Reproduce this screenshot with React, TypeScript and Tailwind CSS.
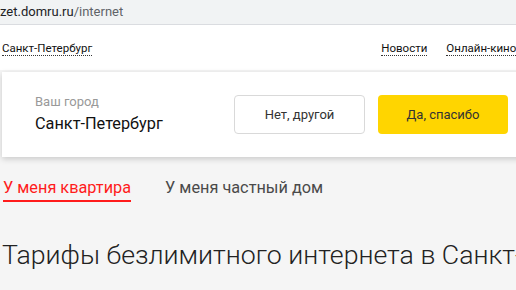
import React from "react";

function AddressBar() {
  return (
    <div className="h-[25px] bg-[#f1f3f4] border-b border-[#dadce0] flex items-center">
      <span className="text-[13px] leading-none text-[#202124] -mt-[1px]">
        zet.domru.ru<span className="text-[#5f6368]">/internet</span>
      </span>
    </div>
  );
}

function Header() {
  return (
    <div className="h-[45px] bg-white flex items-center pl-[2px] w-[560px]">
      <a className="text-[11.5px] text-[#111] border-b border-dotted border-[#333] leading-[14px] mt-[2px]">
        Санкт-Петербург
      </a>
      <nav className="flex items-center gap-[19px] mt-[2px] ml-[289px]">
        <a className="text-[11.5px] text-[#111] border-b border-dotted border-[#333] leading-[14px]">Новости</a>
        <a className="text-[11.5px] text-[#111] border-b border-dotted border-[#333] leading-[14px] whitespace-nowrap">
          Онлайн-кино
        </a>
      </nav>
    </div>
  );
}

function CityCard() {
  return (
    <div className="ml-[2px] mt-[2px] w-[540px] h-[85px] bg-white shadow-[0_2px_6px_rgba(0,0,0,0.18)] flex items-center pl-[33px] pr-[34px]">
      <div className="flex flex-col -mt-[2px]">
        <span className="text-[13px] text-[#999] leading-[16px]">Ваш город</span>
        <span className="text-[16.3px] text-[#111] leading-[20px] mt-[4px]">Санкт-Петербург</span>
      </div>
      <div className="ml-auto flex gap-[13px]">
        <button className="w-[131px] h-[39px] border border-[#d9d9d9] rounded-[4px] bg-white text-[13px] text-[#333]">
          Нет, другой
        </button>
        <button className="w-[130px] h-[39px] rounded-[4px] bg-[#ffd500] text-[13px] text-[#333]">
          Да, спасибо
        </button>
      </div>
    </div>
  );
}

function Tabs() {
  return (
    <div className="flex gap-[34px] pl-[3px] mt-[21px]">
      <div className="text-[16.3px] text-[#ff1c1c] leading-[20px] pb-[2px] border-b-2 border-[#ff1c1c]">
        У меня квартира
      </div>
      <div className="text-[16.3px] text-[#4a4a4a] leading-[20px] pb-[2px]">У меня частный дом</div>
    </div>
  );
}

export default function App() {
  return (
    <div className="w-[516px] h-[290px] overflow-hidden bg-[#f5f5f5] font-['Roboto',sans-serif]">
      <AddressBar />
      <Header />
      <CityCard />
      <Tabs />
      <h1 className="whitespace-nowrap pl-[2px] mt-[36px] text-[26.7px] font-light leading-[34px] text-[#222]">
        Тарифы безлимитного интернета в Санкт-Петербурге
      </h1>
    </div>
  );
}
